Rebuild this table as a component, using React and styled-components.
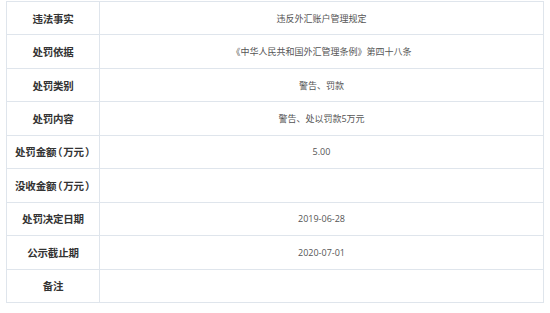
import React from "react";
import styled, { createGlobalStyle } from "styled-components";

const GlobalStyle = createGlobalStyle`
  html, body {
    margin: 0;
    padding: 0;
    background: #fff;
  }
  body {
    font-family: "Open Sans", "Noto Sans CJK SC", sans-serif;
  }
`;

const rows = [
  ["违法事实", "违反外汇账户管理规定"],
  ["处罚依据", "《中华人民共和国外汇管理条例》第四十八条"],
  ["处罚类别", "警告、罚款"],
  ["处罚内容", "警告、处以罚款5万元"],
  ["处罚金额（万元）", "5.00"],
  ["没收金额（万元）", ""],
  ["处罚决定日期", "2019-06-28"],
  ["公示截止期", "2020-07-01"],
  ["备注", ""],
];

const Page = styled.div`
  padding: 1px 0 0 6px;
`;

const Table = styled.div`
  width: 538px;
  display: grid;
  grid-template-columns: 93px 1fr;
  grid-template-rows: repeat(9, 33.45px);
  border-top: 1px solid #dfe5ec;
  border-left: 1px solid #dfe5ec;
  box-sizing: border-box;
`;

const Cell = styled.div`
  display: flex;
  align-items: center;
  justify-content: center;
  box-sizing: border-box;
  border-right: 1px solid #dfe5ec;
  border-bottom: 1px solid #dfe5ec;
  white-space: nowrap;
`;

const Label = styled(Cell)`
  font-family: "Noto Sans CJK SC", sans-serif;
  font-size: 10.5px;
  font-weight: 600;
  color: #333;
  letter-spacing: -0.2px;
`;

const Value = styled(Cell)`
  font-family: "Open Sans", "Noto Sans CJK SC", sans-serif;
  font-size: 9px;
  color: #555;
`;

const Paren = styled.span`
  font-feature-settings: "halt";
  margin: 0 1px;
`;

function renderLabel(text) {
  const parts = text.split(/([（）])/);
  return parts.map((p, i) =>
    p === "（" || p === "）" ? <Paren key={i}>{p}</Paren> : p
  );
}

export default function App() {
  return (
    <Page>
      <GlobalStyle />
      <Table>
        {rows.map(([label, value]) => (
          <React.Fragment key={label}>
            <Label>{renderLabel(label)}</Label>
            <Value>{value}</Value>
          </React.Fragment>
        ))}
      </Table>
    </Page>
  );
}
